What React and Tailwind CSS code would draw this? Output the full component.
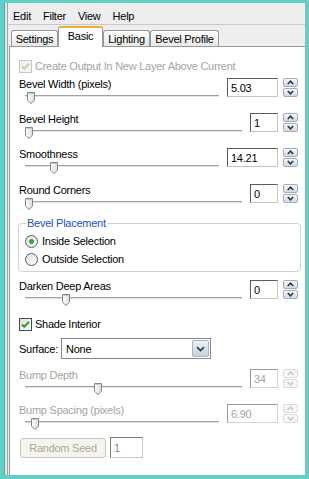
import React from 'react'

const font = { fontFamily: '"Liberation Sans", Arial, sans-serif' }

function Thumb({ pos }) {
  return (
    <svg className={`absolute top-[1px] ${pos}`} width="8" height="12" viewBox="0 0 8 12">
      <defs>
        <linearGradient id="thg" x1="0" y1="0" x2="1" y2="0">
          <stop offset="0" stopColor="#ffffff" />
          <stop offset="1" stopColor="#d9dcd6" />
        </linearGradient>
      </defs>
      <path d="M0.5 0.5 H7.5 V8.2 L4 11.5 L0.5 8.2 Z" fill="url(#thg)" stroke="#7d8b84" />
      <path d="M1.5 1.5 H6.5" stroke="#b8d2b0" />
    </svg>
  )
}

function Arrow({ up, disabled }) {
  return (
    <svg width="7" height="5" viewBox="0 0 7 5">
      <path
        d={up ? 'M0.8 4 L3.5 1.2 L6.2 4' : 'M0.8 1 L3.5 3.8 L6.2 1'}
        fill="none"
        stroke={disabled ? '#c4c8cc' : '#283848'}
        strokeWidth="1.6"
      />
    </svg>
  )
}

function SpinBox({ value, wide, disabled }) {
  return (
    <div className="flex items-start gap-[5px] mt-px">
      <div
        className={`${wide ? 'w-[51px]' : 'w-[28px]'} h-[19px] flex items-center pl-[3px] bg-white border ${
          disabled
            ? 'border-t-[#9a9a9a] border-l-[#9a9a9a] border-r-[#d4d4d4] border-b-[#d4d4d4] text-[#a4a4a4]'
            : 'border-t-[#5a5a5a] border-l-[#5a5a5a] border-r-[#c4c4c4] border-b-[#c4c4c4] text-black'
        }`}
      >
        {value}
      </div>
      <div className="flex flex-col gap-px w-[15px]">
        {[true, false].map((up) => (
          <div
            key={up ? 'u' : 'd'}
            className={`h-[9px] rounded-[2px] border flex items-center justify-center ${
              disabled
                ? 'border-[#d8dce0] bg-[#f6f7f8]'
                : 'border-[#a3adba] bg-linear-to-b from-[#f7f8fa] to-[#d3d9e1]'
            }`}
          >
            <Arrow up={up} disabled={disabled} />
          </div>
        ))}
      </div>
    </div>
  )
}

function SliderRow({ label, value, thumb, wide, disabled, className }) {
  return (
    <div className={`flex items-start ${className}`}>
      <div className="flex-1 flex flex-col">
        <div className={`h-[14px] ${disabled ? 'text-[#a5a59c]' : 'text-black'}`}>{label}</div>
        <div className="relative h-[13px] ml-[6px] mr-[8px]">
          <div className="absolute left-0 right-0 top-[4px] h-[3px] border-t border-t-[#a2a2a2] border-b border-b-white bg-[#e2e2e2]" />
          <Thumb pos={thumb} />
        </div>
      </div>
      <SpinBox value={value} wide={wide} disabled={disabled} />
    </div>
  )
}

function Check({ checked, disabled }) {
  return (
    <div
      className={`w-[13px] h-[13px] border flex items-center justify-center ${
        disabled ? 'border-[#c9c8bc] bg-[#f5f4ef]' : 'border-[#3d4c60] bg-linear-to-br from-[#dedfd9] to-white'
      }`}
    >
      <svg width="11" height="11" viewBox="0 0 11 11">
        <path
          d="M2 5.5 L4.3 7.8 L9 2.8"
          fill="none"
          stroke={disabled ? '#c9c8bc' : checked ? '#2ea12e' : 'none'}
          strokeWidth="2"
        />
      </svg>
    </div>
  )
}

function Radio({ checked }) {
  return (
    <div className="w-[13px] h-[13px] rounded-full border border-[#4a5d78] bg-linear-to-br from-[#dedfd9] to-white flex items-center justify-center">
      {checked && <div className="w-[5px] h-[5px] rounded-full bg-[#3cb43c] border border-[#2b8a2b]" />}
    </div>
  )
}

function Tab({ label, w, selected }) {
  if (selected) {
    return (
      <div
        className={`${w} h-[21px] -mb-px z-10 bg-white border border-b-0 border-[#919b9c] border-t-2 border-t-[#f2a93b] rounded-t-[3px] flex justify-center pt-px`}
      >
        {label}
      </div>
    )
  }
  return (
    <div
      className={`${w} h-[16px] border border-b-0 border-[#919b9c] rounded-t-[3px] bg-linear-to-b from-white to-[#e9e8e2] flex justify-center pt-px`}
    >
      {label}
    </div>
  )
}

export default function App() {
  return (
    <div
      style={font}
      className="w-[309px] h-[479px] bg-[#62cfc6] pt-[3px] pl-[4px] pr-[4px] pb-[4px] flex text-[11px] leading-[14px] tracking-[-0.25px] text-black overflow-hidden"
    >
      {/* window frame */}
      <div className="w-px bg-[#8c8c8c]" />
      <div className="w-[2px] bg-[#e4e4e4]" />
      <div className="w-px bg-[#a5a5a5]" />

      <div className="flex-1 flex flex-col bg-[#eeeeee] min-w-0">
        {/* menu */}
        <div className="h-[22px] flex items-start pt-[6px] pl-[5px] gap-[12px] border-b border-[#c9c9c9]">
          <span>Edit</span>
          <span>Filter</span>
          <span>View</span>
          <span>Help</span>
        </div>

        {/* tabs */}
        <div className="h-[21px] flex items-end pl-[3px]">
          <Tab label="Settings" w="w-[47px]" />
          <Tab label="Basic" w="w-[45px]" selected />
          <Tab label="Lighting" w="w-[47px]" />
          <Tab label="Bevel Profile" w="w-[69px]" />
        </div>

        {/* page */}
        <div className="flex-1 ml-px bg-white border-l border-t border-[#919b9c] pl-[9px] pr-[7px] flex flex-col">
          <div className="mt-[12px] h-[14px] flex items-center gap-[3px] text-[#a5a59c]">
            <Check disabled />
            <span>Create Output In New Layer Above Current</span>
          </div>

          <SliderRow className="mt-[4px]" label="Bevel Width (pixels)" value="5.03" wide thumb="left-[2px]" />
          <SliderRow className="mt-[8px]" label="Bevel Height" value="1" thumb="left-0" />
          <SliderRow className="mt-[8px]" label="Smoothness" value="14.21" wide thumb="left-[25px]" />
          <SliderRow className="mt-[9px]" label="Round Corners" value="0" thumb="left-0" />

          <fieldset className="mt-[6px] -ml-px -mr-[3px] border border-[#d3d2c6] rounded-[4px] pb-[3px]">
            <legend className="ml-[7px] px-[1px] text-[#1a4fc0]">Bevel Placement</legend>
            <div className="mt-[2px] pl-[6px] flex flex-col">
              <div className="h-[18px] flex items-center gap-[4px]">
                <Radio checked />
                <span>Inside Selection</span>
              </div>
              <div className="h-[18px] flex items-center gap-[4px]">
                <Radio />
                <span>Outside Selection</span>
              </div>
            </div>
          </fieldset>

          <SliderRow className="mt-[7px]" label="Darken Deep Areas" value="0" thumb="left-[37px]" />

          <div className="mt-[11px] h-[14px] flex items-center gap-[3px]">
            <Check checked />
            <span>Shade Interior</span>
          </div>

          <div className="mt-[7px] h-[21px] flex items-center">
            <span className="w-[42px]">Surface:</span>
            <div className="w-[150px] h-[21px] border border-[#7c8a9a] bg-white flex items-center justify-between pl-[4px]">
              <span>None</span>
              <div className="w-[17px] h-[17px] mr-px rounded-[2px] border border-[#a9b3c2] bg-linear-to-b from-[#eef1f5] to-[#c9d1dc] flex items-center justify-center">
                <svg width="9" height="6" viewBox="0 0 9 6">
                  <path d="M1 1.2 L4.5 4.6 L8 1.2" fill="none" stroke="#2d3e58" strokeWidth="1.8" />
                </svg>
              </div>
            </div>
          </div>

          <SliderRow className="mt-[9px]" label="Bump Depth" value="34" thumb="left-[69px]" disabled />
          <SliderRow className="mt-[8px]" label="Bump Spacing (pixels)" value="6.90" wide thumb="left-[6px]" disabled />

          <div className="mt-[7px] flex items-center gap-[4px] pl-px">
            <div className="w-[86px] h-[20px] rounded-[3px] border border-[#cac8bb] bg-[#f5f4ee] text-[#aca899] flex items-center justify-center">
              Random Seed
            </div>
            <div className="w-[33px] h-[21px] bg-white border border-t-[#7a7a7a] border-l-[#7a7a7a] border-r-[#c8c8c8] border-b-[#c8c8c8] text-[#8a8a8a] flex items-center pl-[3px]">
              1
            </div>
          </div>
        </div>
      </div>
    </div>
  )
}
